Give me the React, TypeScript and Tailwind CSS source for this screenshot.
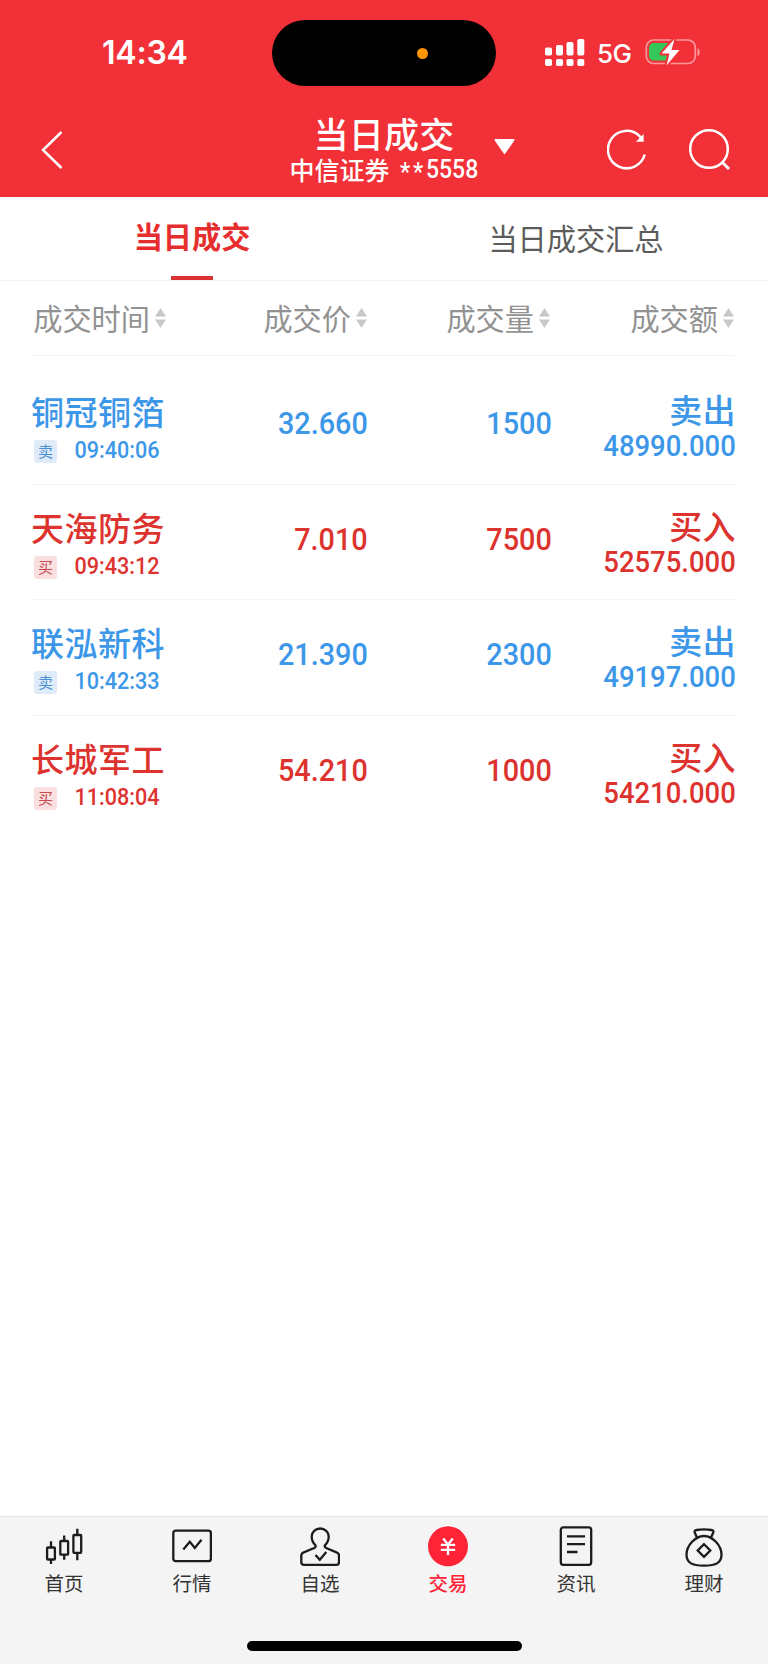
import type { ReactNode } from "react";

type Trade = {
  name: string;
  time: string;
  price: string;
  volume: string;
  amount: string;
  side: "buy" | "sell";
};

const trades: Trade[] = [
  { name: "铜冠铜箔", time: "09:40:06", price: "32.660", volume: "1500", amount: "48990.000", side: "sell" },
  { name: "天海防务", time: "09:43:12", price: "7.010", volume: "7500", amount: "52575.000", side: "buy" },
  { name: "联泓新科", time: "10:42:33", price: "21.390", volume: "2300", amount: "49197.000", side: "sell" },
  { name: "长城军工", time: "11:08:04", price: "54.210", volume: "1000", amount: "54210.000", side: "buy" },
];

function StatusBar() {
  return (
    <div className="flex h-[106px] pt-5 text-white">
      <div className="flex h-[65px] w-[272px] items-center pl-[102px] font-['Inter'] text-[32px] leading-none font-semibold tracking-[-0.2px]">
        <span>14:34</span>
      </div>
      <div className="flex h-[66px] w-[224px] items-center justify-end rounded-full bg-black pr-[68px]">
        <span className="size-[11px] rounded-full bg-[#ff9500]" />
      </div>
      <div className="flex h-[65px] items-center pl-[49px]">
        <svg width="40" height="27" viewBox="0 0 40 27" fill="white">
          <rect x="0" y="8.5" width="7" height="8" rx="1.8" />
          <rect x="11" y="6" width="7" height="10.5" rx="1.8" />
          <rect x="21.5" y="3" width="7" height="13.5" rx="1.8" />
          <rect x="32.3" y="0" width="7" height="16.5" rx="1.8" />
          <rect x="0" y="20" width="7" height="7" rx="1.8" />
          <rect x="11" y="20" width="7" height="7" rx="1.8" />
          <rect x="21.5" y="20" width="7" height="7" rx="1.8" />
          <rect x="32.3" y="20" width="7" height="7" rx="1.8" />
        </svg>
        <span className="mt-[2px] ml-3 w-[36px] font-['Inter'] text-[26px] leading-none font-medium tracking-[-0.5px]">5G</span>
        <svg className="ml-3" width="56" height="28" viewBox="0 0 56 28" fill="none">
          <rect x="1.3" y="1" width="49" height="23.5" rx="7.5" stroke="#f9969b" strokeWidth="1.7" />
          <path d="M52.5 9v8.500c3-1.500 3-7 0-8.500z" fill="#f9969b" />
          <path d="M8.500 4H24v17.500H8.500A4.500 4.500 0 0 1 4 17V8.500A4.500 4.500 0 0 1 8.500 4z" fill="#34c759" />
          <path d="M29.500 0 16.500 14.500h8L21.500 26.500 34.500 11h-8z" fill="white" stroke="#f23037" strokeWidth="4" paintOrder="stroke" strokeLinejoin="round" />
        </svg>
      </div>
    </div>
  );
}

function TitleBar() {
  return (
    <div className="grid h-[90px] grid-cols-[272px_224px_272px] text-white">
      <div className="pt-[25px] pl-[41px]">
        <svg width="22" height="38" viewBox="0 0 22 38" fill="none" stroke="white" strokeWidth="2.500">
          <path d="M20.500 1 2 19l18.500 18" />
        </svg>
      </div>
      <div className="flex flex-col items-center whitespace-nowrap">
        <div className="mt-[7px] h-[41px] text-[35px] leading-[40px] font-medium tracking-[0.3px]">当日成交</div>
        <div className="flex h-[30px] items-center text-[25px] leading-[30px] font-medium">
          <span>中信证券</span>
          <span className="ml-[10px] flex h-[30px] w-[79px]">
            <span className="flex origin-left scale-x-[0.92] font-['Roboto'] leading-[30px]">
              <span className="pt-[4px] tracking-[3px]">**</span>
              <span className="pt-[1px]">5558</span>
            </span>
          </span>
        </div>
      </div>
      <div className="flex items-start">
        <svg className="mt-[32px] -ml-[2px]" width="22" height="17" viewBox="0 0 22 17" fill="white">
          <path d="M1.500 1h18a1 1 0 0 1 .8 1.500l-9 13.100a1 1 0 0 1-1.600 0L.7 2.500A1 1 0 0 1 1.500 1z" />
        </svg>
        <svg className="mt-[23px] ml-[91px]" width="40" height="42" viewBox="0 0 40 42" fill="none" stroke="white" strokeWidth="2.500">
          <path d="M37.700 25.500A18.700 18.700 0 1 1 32.500 7l2.500 3" />
          <path d="M36 6.500v5.500H30.500z" fill="white" strokeWidth="1.300" />
        </svg>
        <svg className="mt-[22px] ml-[42px]" width="42" height="43" viewBox="0 0 42 43" fill="none" stroke="white" strokeWidth="2.500">
          <circle cx="20" cy="21" r="18.800" />
          <path d="M33 34l7 7" strokeWidth="3" />
        </svg>
      </div>
    </div>
  );
}

function SortLabel({ children }: { children: ReactNode }) {
  return (
    <div className="flex items-center justify-end gap-[5px]">
      <span>{children}</span>
      <svg width="11" height="20" viewBox="0 0 11 20" fill="#c8c8c8">
        <path d="M5.500 0 11 8.500H0z" />
        <path d="M5.500 20 0 11.500h11z" />
      </svg>
    </div>
  );
}

function TradeRow({ trade, last }: { trade: Trade; last: boolean }) {
  const buy = trade.side === "buy";
  return (
    <div
      className={`grid h-[115.5px] grid-cols-[169px_168px_184px_185px] ${buy ? "text-[#dd332f]" : "text-[#3c97e8]"} ${
        last ? "" : "border-b-[1.5px] border-[#f3f4f5]"
      }`}
    >
      <div className="pt-[24px] whitespace-nowrap">
        <div className="h-[37px] text-[33px] leading-[37px] font-medium tracking-[0.5px]">{trade.name}</div>
        <div className="flex h-[40px] items-center pl-[3px]">
          <span
            className={`mt-[3px] flex size-[23px] items-center justify-center rounded-[3px] text-[15px] leading-[21px] ${
              buy ? "bg-[#f9dfdf] text-[#c94b50]" : "bg-[#dfebf9] text-[#4a8fcf]"
            }`}
          >
            <span className="-mt-[2px]">{buy ? "买" : "卖"}</span>
          </span>
          <span className="flex w-[102px] justify-end">
            <span className="origin-right scale-x-[0.9] font-['Roboto'] text-[24px] leading-none font-medium">{trade.time}</span>
          </span>
        </div>
      </div>
      <div className="flex h-[73px] items-end justify-end">
        <span className="origin-right scale-x-[0.9] font-['Roboto'] text-[32px] leading-[38px] font-medium">{trade.price}</span>
      </div>
      <div className="flex h-[73px] items-end justify-end">
        <span className="origin-right scale-x-[0.9] font-['Roboto'] text-[32px] leading-[38px] font-medium">{trade.volume}</span>
      </div>
      <div className="flex flex-col items-end pt-[22px] pr-[1px]">
        <div className="h-[37px] text-[33px] leading-[37px] font-medium tracking-[0.4px]">{buy ? "买入" : "卖出"}</div>
        <span className="origin-right scale-x-[0.915] font-['Roboto'] text-[30px] leading-[36px] font-medium">{trade.amount}</span>
      </div>
    </div>
  );
}

const navItems: { label: string; active?: boolean; icon: ReactNode }[] = [
  {
    label: "首页",
    icon: (
      <>
        <rect x="3.100" y="21.500" width="7.800" height="12" rx="0.800" />
        <path d="M7 15.300v6.200M7 33.500v4.500" />
        <rect x="16.300" y="15" width="7.800" height="13.700" rx="0.800" />
        <path d="M20.200 9.500v5.500M20.200 28.700v5" />
        <rect x="29.400" y="9" width="7.800" height="17.800" rx="0.800" />
        <path d="M33.300 2.700v6.300M33.300 26.800v7.500" />
      </>
    ),
  },
  {
    label: "行情",
    icon: (
      <>
        <rect x="1.300" y="4.700" width="37.600" height="30.500" rx="2.500" />
        <path d="M11.300 23.500l6.500-7.800 5 6.300 6.700-8.200" />
      </>
    ),
  },
  {
    label: "自选",
    icon: (
      <>
        <path d="M15.500 19.300C12.500 16.500 11.700 13.500 11.700 10.500a8.500 8 0 0 1 17 0c0 3-.8 6-3.800 8.800-.5 1.300 0 2.300 1.800 3l9.800 4c1.700.6 2.500 1.500 2.500 3.300v6.500c0 1.800-.8 2.800-2.500 2.800H4c-1.700 0-2.700-1-2.700-2.800v-6.500c0-1.800.8-2.700 2.500-3.300l9.800-4c1.900-.7 2.400-1.700 1.900-3z" />
        <path d="M15.500 29l4.300 4.700 6.500-7.700" />
      </>
    ),
  },
  {
    label: "交易",
    active: true,
    icon: (
      <>
        <circle cx="20" cy="20.300" r="20" fill="#ff2337" stroke="none" />
        <path d="M15.200 12.500l4.800 6 4.800-6M12.800 18.800h14.400M12.800 23.800h14.400M20 18.500v10.500" stroke="white" strokeWidth="2.300" />
      </>
    ),
  },
  {
    label: "资讯",
    icon: (
      <>
        <rect x="4.800" y="1.300" width="30.400" height="37.500" rx="2.500" />
        <path d="M11 10.400h18M11 18.200h18M11 26h10.500" />
      </>
    ),
  },
  {
    label: "理财",
    icon: (
      <>
        <path d="M13 11.500 10.700 6.500C10.200 5 11 4.200 12.500 4c5-.8 10-.8 15 0 1.500.2 2.300 1 1.800 2.500L27 11.500" />
        <path d="M20 10c9 0 17.500 10 17.500 18.500 0 8-5 11.200-17.500 11.200S2.500 36.500 2.500 28.500C2.500 20 11 10 20 10z" />
        <path d="M20 18.200l6.300 6.300-6.300 6.300-6.300-6.300z" />
      </>
    ),
  },
];

function BottomNav() {
  return (
    <nav className="flex h-[148px] flex-col items-center border-t border-[#e4e4e4] bg-[#f4f4f4]">
      <div className="grid h-[124px] w-full grid-cols-6">
        {navItems.map((item) => (
          <div key={item.label} className="flex flex-col items-center pt-[9px]">
            <svg width="40" height="41" viewBox="0 0 40 41" fill="none" stroke="#1c1c1c" strokeWidth="2.300">
              {item.icon}
            </svg>
            <span
              className={`mt-[2px] text-[19.5px] leading-[28px] ${
                item.active ? "font-medium text-[#ff2337]" : "text-[#333]"
              }`}
            >
              {item.label}
            </span>
          </div>
        ))}
      </div>
      <div className="h-[9.500px] w-[275px] rounded-full bg-black" />
    </nav>
  );
}

export default function App() {
  return (
    <div className="flex h-[1665px] w-[768px] flex-col overflow-hidden bg-white font-['Noto_Sans_CJK_SC',sans-serif]">
      <header className="h-[196.5px] shrink-0 bg-[#f23037]">
        <StatusBar />
        <TitleBar />
      </header>
      <div className="grid h-[84.500px] shrink-0 grid-cols-2 border-b border-[#f3f3f3] text-[29.200px]">
        <div className="flex flex-col items-center justify-between text-[#e62e2e]">
          <span className="pt-[16px] leading-[44px] font-bold">当日成交</span>
          <span className="h-1 w-[42px] bg-[#dd3034]" />
        </div>
        <div className="pt-[18px] text-center leading-[44px] text-[#5c5c5c]">当日成交汇总</div>
      </div>
      <div className="mr-[34px] ml-[33px] grid h-[75px] shrink-0 grid-cols-[133px_201px_183px_184px] border-b border-[#f3f3f3] text-[29.200px] leading-none whitespace-nowrap text-[#929292]">
        <SortLabel>成交时间</SortLabel>
        <SortLabel>成交价</SortLabel>
        <SortLabel>成交量</SortLabel>
        <SortLabel>成交额</SortLabel>
      </div>
      <main className="flex-1 pt-[13px] pr-[31px] pl-[31px]">
        {trades.map((trade, i) => (
          <TradeRow key={trade.name} trade={trade} last={i === trades.length - 1} />
        ))}
      </main>
      <BottomNav />
      <div className="h-px shrink-0 bg-white" />
    </div>
  );
}
